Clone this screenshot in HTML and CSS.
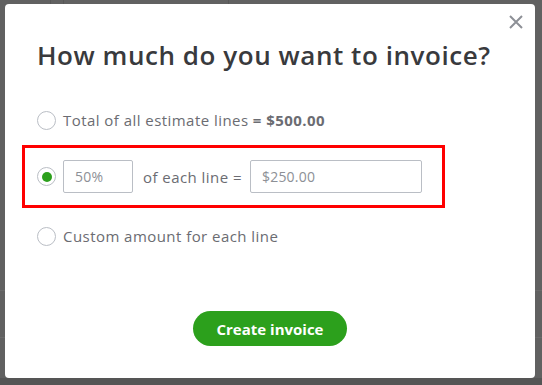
FILE: index.html
```html
<!DOCTYPE html>
<html>
<head>
  <title>Create invoice</title>
  <link rel="stylesheet" href="styles.css">
</head>
<body>
  <div class="backdrop">
    <div class="modal">
      <button class="close" aria-label="Close">
        <svg width="14" height="14" viewBox="0 0 14 14">
          <path d="M1 1 L13 13 M13 1 L1 13" stroke="#8d9096" stroke-width="2" fill="none"/>
        </svg>
      </button>
      <h1 class="title">How much do you want to invoice?</h1>

      <div class="options">
        <label class="option">
          <span class="radio"></span>
          <span>Total of all estimate lines <b>= $500.00</b></span>
        </label>

        <div class="highlight">
          <label class="option">
            <span class="radio checked"></span>
            <span class="field small">50%</span>
            <span>of each line =</span>
            <span class="field wide">$250.00</span>
          </label>
        </div>

        <label class="option">
          <span class="radio"></span>
          <span>Custom amount for each line</span>
        </label>
      </div>

      <div class="footer">
        <button class="btn-primary">Create invoice</button>
      </div>
    </div>
  </div>
</body>
</html>
```

FILE: styles.css
```css
body {
  margin: 0;
  padding: 0;
  background-color: #5f5f5f;
  font-family: "Open Sans", Lato, sans-serif;
  overflow: hidden;
}

/* faint lines of the page behind the overlay */
.backdrop {
  width: 542px;
  height: 385px;
  padding: 4px 7px 7px 5px;
  box-sizing: border-box;
  background-color: #616161;
  background-image:
    linear-gradient(#575757, #575757),
    linear-gradient(#575757, #575757),
    linear-gradient(#575757, #575757),
    linear-gradient(#6a6a6a, #6a6a6a),
    linear-gradient(#6a6a6a, #6a6a6a),
    linear-gradient(#555, #555);
  background-size: 1px 4px, 1px 4px, 1px 4px, 100% 1px, 100% 1px, 100% 7px;
  background-position: 50px 0, 63px 0, 228px 0, 0 290px, 0 337px, 0 378px;
  background-repeat: no-repeat;
}

.modal {
  position: relative;
  height: 100%;
  background-color: white;
  border-radius: 4px;
  padding: 33px 0 0 32px;
  box-sizing: border-box;
  color: #393a3d;
}

.close {
  position: absolute;
  top: 11px;
  right: 12px;
  border: none;
  background: none;
  padding: 0;
  cursor: pointer;
}

.title {
  margin: 0;
  font-size: 26px;
  font-weight: 600;
  line-height: 36px;
  letter-spacing: 0.55px;
}

.options {
  margin-top: 35px;
  display: flex;
  flex-direction: column;
}

.option {
  display: flex;
  align-items: center;
  gap: 7px;
  font-size: 15px;
  letter-spacing: 0.45px;
  color: #6b6c72;
  height: 24px;
}

.option b {
  color: #6b6c72;
  font-weight: 700;
}

.radio {
  width: 19px;
  height: 19px;
  border: 1px solid #babec5;
  border-radius: 50%;
  box-sizing: border-box;
  display: flex;
  align-items: center;
  justify-content: center;
  flex-shrink: 0;
}

.radio.checked::after {
  content: "";
  width: 10px;
  height: 10px;
  border-radius: 50%;
  background-color: #2ca01c;
}

.highlight {
  margin: 13px 0 16px -15px;
  width: 423px;
  height: 63px;
  border: 3px solid #f00;
  box-sizing: border-box;
  padding: 0 0 0 12px;
  display: flex;
  align-items: center;
}

.highlight .option {
  gap: 0;
}

.field {
  height: 33px;
  border: 1px solid #babec5;
  border-radius: 2px;
  box-sizing: border-box;
  display: flex;
  align-items: center;
  padding-left: 11px;
  color: #8d9096;
  font-size: 14px;
  letter-spacing: 0.2px;
}

.field.small {
  width: 70px;
  margin: 0 10px 0 7px;
}

.field.wide {
  width: 172px;
  margin-left: 8px;
}

.footer {
  display: flex;
  justify-content: center;
  margin: 63px 0 0 -32px;
}

.btn-primary {
  width: 154px;
  height: 35px;
  border: none;
  border-radius: 18px;
  background-color: #2ca01c;
  color: white;
  font-family: "Open Sans", sans-serif;
  font-size: 15px;
  font-weight: 700;
  cursor: pointer;
}
```
